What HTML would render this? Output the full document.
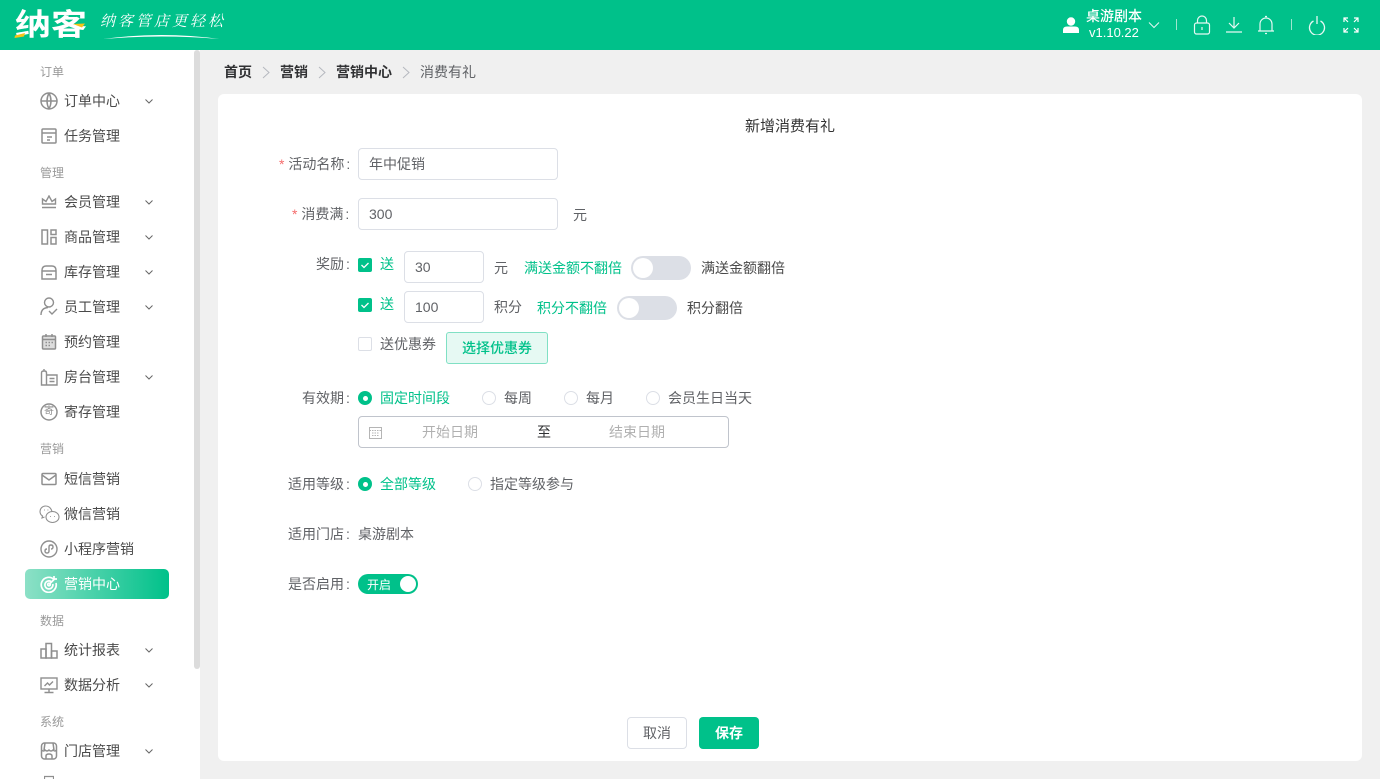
<!DOCTYPE html>
<html lang="zh-CN"><head><meta charset="utf-8"><title>新增消费有礼</title>
<style>
html,body{margin:0;padding:0;width:1380px;height:779px;overflow:hidden;background:#f0f0f0}
body{position:relative;font-family:"Liberation Sans","Noto Sans CJK SC",sans-serif;font-size:14px;color:#606266}
.a,.t,svg.i,.box,.sw,.cb,.r{position:absolute}
.t{white-space:nowrap;height:20px;line-height:20px}
.t b{font-weight:400;margin-left:2px}
.g{color:#00c18a}
.d{color:#303133}
.box{box-sizing:border-box;background:#fff;border:1px solid #dcdfe6;border-radius:4px}
.m{color:#4a4a4a}
.h{color:#999;font-size:12px}
.sw{width:60px;height:24px;border-radius:12px;background:#dcdfe6}
.sw:after{content:"";position:absolute;left:2px;top:2px;width:20px;height:20px;border-radius:50%;background:#fff}
.cb{box-sizing:border-box;width:14px;height:14px;border-radius:2px;background:#00c18a}
.cb svg{position:absolute;left:0;top:0}
.cb.off{background:#fff;border:1px solid #dcdfe6}
.r{box-sizing:border-box;width:14px;height:14px;border-radius:50%;border:1px solid #dcdfe6;background:#fff}
.r.on{border:0;background:#00c18a}
.r.on:after{content:"";position:absolute;left:4.5px;top:4.5px;width:5px;height:5px;border-radius:50%;background:#fff}
svg.i{fill:none;stroke:#8f8f8f;stroke-width:1.4}
svg.w{stroke:#fff;opacity:.9}
svg.c{stroke:#666;stroke-width:1}
svg.b{stroke:#b5b8bf;stroke-width:1}
</style></head><body>

<!-- header -->
<div class="a" style="left:0;top:0;width:1380px;height:50px;background:#00c18a"></div>
<div class="t" style="left:15px;top:7px;height:38px;line-height:38px;font-size:30px;font-weight:700;color:#fff;transform:scaleX(1.2);transform-origin:left center">纳客</div>
<svg class="a" style="left:0;top:0" width="100" height="45"><path d="M15 35.500l10-2.500-1 3.500-9.500 1.500zM73 24l12-.5-3 4z" fill="#f5c518"/></svg>
<div class="t" style="left:100px;top:12px;font-size:15px;letter-spacing:3px;color:#fff;font-style:italic;font-family:'Liberation Serif','Noto Serif CJK SC',serif">纳客管店更轻松</div>
<svg class="a" style="left:102px;top:33px" width="120" height="8"><path d="M1 6Q60-2 117 6Q60 1 1 6z" fill="#fff"/></svg>

<svg class="a" style="left:1062px;top:16px" width="18" height="18"><circle cx="9" cy="5.500" r="4.200" fill="#fff"/><path d="M1 17v-3q0-3.500 4-3.500h8q4 0 4 3.500v3z" fill="#fff"/></svg>
<div class="t" style="left:1086px;top:6px;color:#fff;font-weight:500">桌游剧本</div>
<div class="t" style="left:1089px;top:23px;color:#fff;font-size:13px">v1.10.22</div>
<svg class="i w" style="left:1148px;top:21px;stroke-width:1" width="12" height="8"><path d="M1 1.500l5 5 5-5"/></svg>
<div class="a" style="left:1176px;top:19px;width:1px;height:11px;background:#9fe6cf"></div>
<svg class="i w" style="left:1193px;top:15px;stroke-width:1.200" width="18" height="20"><rect x="1.500" y="8" width="15" height="11" rx="2"/><path d="M4.500 8V5.500a4.500 4.500 0 0 1 9 0V8M9 12v3"/></svg>
<svg class="i w" style="left:1226px;top:16px;stroke-width:1.200" width="16" height="17"><path d="M8 1v10M3 7l5 5 5-5M0 16h16"/></svg>
<svg class="i w" style="left:1257px;top:15px;stroke-width:1.200" width="18" height="20"><path d="M1 16h16M3 16V9a6 6 0 0 1 12 0v7M8 1.500h2M8 18.500h2"/></svg>
<div class="a" style="left:1291px;top:19px;width:1px;height:11px;background:#9fe6cf"></div>
<svg class="i w" style="left:1308px;top:15px;stroke-width:1.300" width="18" height="20"><path d="M5.500 6a7.500 7.500 0 1 0 7 0M9 1v8"/></svg>
<svg class="i w" style="left:1343px;top:17px;stroke-width:1.200;opacity:1" width="16" height="16"><path d="M1 5V1h4M1 1l4 4M15 5V1h-4M15 1l-4 4M1 11v4h4M1 15l4-4M15 11v4h-4M15 15l-4-4"/></svg>

<!-- sidebar -->
<div class="a" style="left:0;top:50px;width:200px;height:729px;background:#fff"></div>
<div class="a" style="left:194px;top:50px;width:6px;height:619px;background:#dcdcdc;border-radius:3px"></div>

<div class="t h" style="left:40px;top:62px">订单</div>
<div class="t h" style="left:40px;top:163px">管理</div>
<div class="t h" style="left:40px;top:439px">营销</div>
<div class="t h" style="left:40px;top:611px">数据</div>
<div class="t h" style="left:40px;top:712px">系统</div>

<div class="t m" style="left:64px;top:91px">订单中心</div>
<div class="t m" style="left:64px;top:126px">任务管理</div>
<div class="t m" style="left:64px;top:192px">会员管理</div>
<div class="t m" style="left:64px;top:227px">商品管理</div>
<div class="t m" style="left:64px;top:262px">库存管理</div>
<div class="t m" style="left:64px;top:297px">员工管理</div>
<div class="t m" style="left:64px;top:332px">预约管理</div>
<div class="t m" style="left:64px;top:367px">房台管理</div>
<div class="t m" style="left:64px;top:402px">寄存管理</div>
<div class="t m" style="left:64px;top:469px">短信营销</div>
<div class="t m" style="left:64px;top:504px">微信营销</div>
<div class="t m" style="left:64px;top:539px">小程序营销</div>
<div class="a" style="left:25px;top:569px;width:144px;height:30px;border-radius:5px;background:linear-gradient(90deg,#8ce0c6,#00c18a)"></div>
<div class="t" style="left:64px;top:574px;color:#fff">营销中心</div>
<div class="t m" style="left:64px;top:640px">统计报表</div>
<div class="t m" style="left:64px;top:675px">数据分析</div>
<div class="t m" style="left:64px;top:741px">门店管理</div>

<!-- chevrons -->
<svg class="i c" style="left:145px;top:99px" width="8" height="5"><path d="M.5 .5l3.500 3.500 3.500-3.500"/></svg>
<svg class="i c" style="left:145px;top:200px" width="8" height="5"><path d="M.5 .5l3.500 3.500 3.500-3.500"/></svg>
<svg class="i c" style="left:145px;top:235px" width="8" height="5"><path d="M.5 .5l3.500 3.500 3.500-3.500"/></svg>
<svg class="i c" style="left:145px;top:270px" width="8" height="5"><path d="M.5 .5l3.500 3.500 3.500-3.500"/></svg>
<svg class="i c" style="left:145px;top:305px" width="8" height="5"><path d="M.5 .5l3.500 3.500 3.500-3.500"/></svg>
<svg class="i c" style="left:145px;top:375px" width="8" height="5"><path d="M.5 .5l3.500 3.500 3.500-3.500"/></svg>
<svg class="i c" style="left:145px;top:648px" width="8" height="5"><path d="M.5 .5l3.500 3.500 3.500-3.500"/></svg>
<svg class="i c" style="left:145px;top:683px" width="8" height="5"><path d="M.5 .5l3.500 3.500 3.500-3.500"/></svg>
<svg class="i c" style="left:145px;top:749px" width="8" height="5"><path d="M.5 .5l3.500 3.500 3.500-3.500"/></svg>

<!-- menu icons -->
<svg class="i" style="left:40px;top:92px;stroke-width:1.500" width="18" height="18"><circle cx="9" cy="9" r="8"/><path d="M1 9h16M9 1q-4 8 0 16M9 1q4 8 0 16"/></svg>
<svg class="i" style="left:41px;top:127px;stroke-width:1.500" width="16" height="18"><rect x="1" y="2" width="14" height="14" rx="1"/><path d="M1 6h14M6 10h5M6 13h3"/></svg>
<svg class="i" style="left:41px;top:195px" width="16" height="14"><path d="M1.500 9V4l3.500 2.500L8 1l3 5.500L14.500 4v5zM1 12.500h14"/></svg>
<svg class="i" style="left:41px;top:229px;stroke-width:1.500" width="16" height="16"><rect x="1" y="1" width="5.500" height="14"/><rect x="10" y="1" width="5" height="4.500"/><rect x="10" y="8.500" width="5" height="6.500"/></svg>
<svg class="i" style="left:41px;top:264px;stroke-width:1.500" width="16" height="16"><path d="M1 6.500q0-4.500 4-4.500h6q4 0 4 4.500v8.500H1zM1 7h14M5 10.500h6"/></svg>
<svg class="i" style="left:40px;top:297px" width="18" height="20"><circle cx="9" cy="5.500" r="4.500"/><path d="M1 18q0-7 7-7.500M9 14l3 3 5-5"/></svg>
<svg class="i" style="left:41px;top:333px;stroke-width:1.500" width="16" height="18"><rect x="1.500" y="3" width="13" height="13" rx="1" fill="#ddd"/><path d="M1.500 6.500h13M5 1v3M11 1v3M4.500 9.500h1.500M7.500 9.500h1.500M10.500 9.500h1.500M4.500 12.500h1.500M7.500 12.500h1.500"/></svg>
<svg class="i" style="left:40px;top:368px" width="18" height="18"><path d="M1.500 17V5q0-2 2.500-2h.5q2 0 2 2v12zM6.500 7h10.500v10H1.500M9.500 10.500h5M9.500 13.500h5M4 1v2"/></svg>
<svg class="i" style="left:40px;top:403px;stroke-width:1.500" width="18" height="18"><circle cx="9" cy="9" r="8"/></svg>
<div class="t" style="left:44px;top:402px;font-size:10px;color:#8f8f8f">寄</div>
<svg class="i" style="left:41px;top:472px;stroke-width:1.500" width="16" height="14"><rect x="1" y="1.500" width="14" height="11" rx="1"/><path d="M1 3l7 5 7-5"/></svg>
<svg class="i" style="left:39px;top:505px;stroke-width:1.100" width="21" height="19"><path d="M13 6.500C12 3 9.500 1 6.500 1 3.500 1 1 3.500 1 6.500c0 2 1 3.500 2.500 4.500L3 13l2.500-1"/><ellipse cx="13.500" cy="12" rx="6.500" ry="5.500"/><path d="M11 11.500h.8M15 11.500h.8M5 5h.8M8.500 5h.8"/></svg>
<svg class="i" style="left:40px;top:540px;stroke-width:1.400" width="18" height="18"><circle cx="9" cy="9" r="8"/><path d="M9 7v4q0 2-2 2t-2-2 2-2M9 11V7q0-2 2-2t2 2-2 2"/></svg>
<svg class="i w" style="left:40px;top:575px;stroke-width:1.700;opacity:1" width="18" height="18"><path d="M14 4.500A7.500 7.500 0 1 0 16 8"/><path d="M11 6.500a4 4 0 1 0 1.800 2.500"/><circle cx="9" cy="9.500" r="1.300"/><path d="M9 9.500l6-6M14 1v3h3"/></svg>
<svg class="i" style="left:40px;top:642px;stroke-width:1.500" width="18" height="17"><rect x="1" y="7" width="5" height="9"/><rect x="6" y="1.500" width="5.500" height="14.500"/><rect x="11.500" y="9" width="5.500" height="7"/></svg>
<svg class="i" style="left:40px;top:677px;stroke-width:1.400" width="18" height="17"><rect x="1" y="1" width="16" height="11"/><path d="M9 12v3.500M4.500 15.500h9M4.500 9l3-3 2 2 3.500-3.500"/></svg>
<svg class="i" style="left:40px;top:742px;stroke-width:1.500" width="18" height="18"><rect x="1.500" y="1" width="15" height="16" rx="3"/><path d="M1.500 8q2 2 3.500 0 2 2 4 0 2 2 4 0 2 2 3.500 0M5 1l-1 7M13 1l1 7M6 17v-3q0-2 3-2t3 2v3"/></svg>
<svg class="i" style="left:44px;top:775px;stroke-width:1.200" width="10" height="4"><path d="M.5 4V1.500h9V4"/></svg>

<!-- breadcrumb -->
<div class="t d" style="left:224px;top:62px;font-weight:700">首页</div>
<svg class="i b" style="left:262px;top:66px" width="9" height="13"><path d="M1 1l6 5.500L1 12"/></svg>
<div class="t d" style="left:280px;top:62px;font-weight:700">营销</div>
<svg class="i b" style="left:318px;top:66px" width="9" height="13"><path d="M1 1l6 5.500L1 12"/></svg>
<div class="t d" style="left:336px;top:62px;font-weight:700">营销中心</div>
<svg class="i b" style="left:402px;top:66px" width="9" height="13"><path d="M1 1l6 5.500L1 12"/></svg>
<div class="t" style="left:420px;top:62px">消费有礼</div>

<!-- card -->
<div class="a" style="left:218px;top:94px;width:1144px;height:667px;background:#fff;border-radius:6px"></div>
<div class="t" style="left:745px;top:117px;color:#333;font-size:15px">新增消费有礼</div>

<div class="t" style="left:279px;top:154px"><span style="color:#f56c6c">*</span> 活动名称<b>:</b></div>
<div class="box" style="left:358px;top:148px;width:200px;height:32px"></div>
<div class="t" style="left:369px;top:154px">年中促销</div>

<div class="t" style="left:292px;top:204px"><span style="color:#f56c6c">*</span> 消费满<b>:</b></div>
<div class="box" style="left:358px;top:198px;width:200px;height:32px"></div>
<div class="t" style="left:369px;top:204px">300</div>
<div class="t" style="left:573px;top:205px">元</div>

<div class="t" style="left:316px;top:254px">奖励<b>:</b></div>
<div class="cb" style="left:358px;top:258px"><svg width="14" height="14" fill="none" stroke="#fff" stroke-width="1.300"><path d="M3.500 7l2.500 2.500 4.500-4.500"/></svg></div>
<div class="t g" style="left:380px;top:254px">送</div>
<div class="box" style="left:404px;top:251px;width:80px;height:32px"></div>
<div class="t" style="left:415px;top:257px">30</div>
<div class="t" style="left:494px;top:258px">元</div>
<div class="t g" style="left:524px;top:258px">满送金额不翻倍</div>
<div class="sw" style="left:631px;top:256px"></div>
<div class="t" style="left:701px;top:258px;color:#4a4a4a">满送金额翻倍</div>

<div class="cb" style="left:358px;top:298px"><svg width="14" height="14" fill="none" stroke="#fff" stroke-width="1.300"><path d="M3.500 7l2.500 2.500 4.500-4.500"/></svg></div>
<div class="t g" style="left:380px;top:294px">送</div>
<div class="box" style="left:404px;top:291px;width:80px;height:32px"></div>
<div class="t" style="left:415px;top:297px">100</div>
<div class="t" style="left:494px;top:297px">积分</div>
<div class="t g" style="left:537px;top:298px">积分不翻倍</div>
<div class="sw" style="left:617px;top:296px"></div>
<div class="t" style="left:687px;top:298px;color:#4a4a4a">积分翻倍</div>

<div class="cb off" style="left:358px;top:337px"></div>
<div class="t" style="left:380px;top:334px">送优惠券</div>
<div class="a" style="box-sizing:border-box;left:446px;top:332px;width:102px;height:32px;background:#e6f9f3;border:1px solid #80e0c4;border-radius:3px"></div>
<div class="t g" style="left:462px;top:338px;font-weight:500">选择优惠券</div>

<div class="t" style="left:302px;top:388px">有效期<b>:</b></div>
<div class="r on" style="left:358px;top:391px"></div>
<div class="t g" style="left:380px;top:388px">固定时间段</div>
<div class="r" style="left:482px;top:391px"></div>
<div class="t" style="left:504px;top:388px">每周</div>
<div class="r" style="left:564px;top:391px"></div>
<div class="t" style="left:586px;top:388px">每月</div>
<div class="r" style="left:646px;top:391px"></div>
<div class="t" style="left:668px;top:388px">会员生日当天</div>

<div class="box" style="left:358px;top:416px;width:371px;height:32px;border-color:#c0c4cc"></div>
<svg class="i" style="left:369px;top:426px;stroke:#b5b5b5;stroke-width:1" width="13" height="13"><rect x=".5" y="1.500" width="12" height="11"/><path d="M.5 4.500h12M3 7h7M3 9.500h7" stroke-dasharray="1.500 1"/></svg>
<div class="t" style="left:422px;top:422px;color:#b0b0b0">开始日期</div>
<div class="t d" style="left:537px;top:422px">至</div>
<div class="t" style="left:609px;top:422px;color:#b0b0b0">结束日期</div>

<div class="t" style="left:288px;top:474px">适用等级<b>:</b></div>
<div class="r on" style="left:358px;top:477px"></div>
<div class="t g" style="left:380px;top:474px">全部等级</div>
<div class="r" style="left:468px;top:477px"></div>
<div class="t" style="left:490px;top:474px">指定等级参与</div>

<div class="t" style="left:288px;top:524px">适用门店<b>:</b></div>
<div class="t" style="left:358px;top:524px">桌游剧本</div>

<div class="t" style="left:288px;top:574px">是否启用<b>:</b></div>
<div class="a" style="left:358px;top:574px;width:60px;height:20px;border-radius:10px;background:#00c18a"></div>
<div class="a" style="left:400px;top:576px;width:16px;height:16px;border-radius:50%;background:#fff"></div>
<div class="t" style="left:367px;top:575px;font-size:12px;color:#fff">开启</div>

<div class="box" style="left:627px;top:717px;width:60px;height:32px"></div>
<div class="t" style="left:643px;top:723px">取消</div>
<div class="a" style="left:699px;top:717px;width:60px;height:32px;background:#00c18a;border-radius:4px"></div>
<div class="t" style="left:715px;top:723px;color:#fff;font-weight:700">保存</div>
</body></html>
